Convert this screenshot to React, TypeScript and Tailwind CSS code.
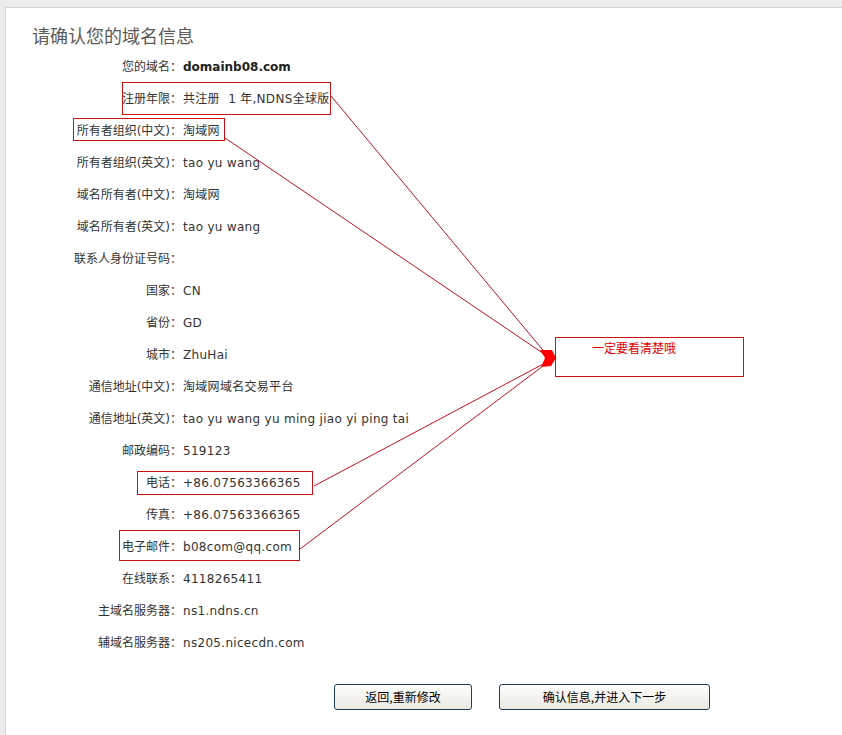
import React from "react";

const rows: { label: string; value: string; bold?: boolean }[] = [
  { label: "您的域名：", value: "domainb08.com", bold: true },
  { label: "注册年限：", value: "共注册  1 年,NDNS全球版" },
  { label: "所有者组织(中文)：", value: "淘域网" },
  { label: "所有者组织(英文)：", value: "tao yu wang" },
  { label: "域名所有者(中文)：", value: "淘域网" },
  { label: "域名所有者(英文)：", value: "tao yu wang" },
  { label: "联系人身份证号码：", value: "" },
  { label: "国家：", value: "CN" },
  { label: "省份：", value: "GD" },
  { label: "城市：", value: "ZhuHai" },
  { label: "通信地址(中文)：", value: "淘域网域名交易平台" },
  { label: "通信地址(英文)：", value: "tao yu wang yu ming jiao yi ping tai" },
  { label: "邮政编码：", value: "519123" },
  { label: "电话：", value: "+86.07563366365" },
  { label: "传真：", value: "+86.07563366365" },
  { label: "电子邮件：", value: "b08com@qq.com" },
  { label: "在线联系：", value: "4118265411" },
  { label: "主域名服务器：", value: "ns1.ndns.cn" },
  { label: "辅域名服务器：", value: "ns205.nicecdn.com" },
];

const font = "font-['DejaVu_Sans','Noto_Sans_CJK_SC',sans-serif]";

export default function App() {
  return (
    <div className={`relative w-[842px] h-[735px] overflow-hidden bg-[#ececec] pt-[7px] pl-[5px] ${font}`}>
      <div className="h-full bg-white border-l border-t border-[#d6d6d6] pt-[15px]">
        <div className="pl-[26px] h-[24px] leading-[24px] text-[18px] text-[#5a5a5a] font-['Noto_Sans_CJK_SC',sans-serif] mb-[4px]">
          请确认您的域名信息
        </div>
        <div className="flex flex-col">
          {rows.map((r) => (
            <div key={r.label} className="flex h-[32px] items-center text-[12px] text-[#333333]">
              <div className="w-[176px] shrink-0 text-right whitespace-pre">{r.label}</div>
              <div className={`pl-[1px] whitespace-pre ${r.bold ? "font-bold text-[#222222]" : "tracking-[0.3px]"}`}>{r.value}</div>
            </div>
          ))}
        </div>
        <div className="flex mt-[25px] pl-[328px] gap-[27px]">
          <button className="w-[138px] h-[26px] rounded-[3px] border border-[#1f3d5c] bg-gradient-to-b from-[#fdfdfb] to-[#ebe9e2] text-[12px] text-black font-['Noto_Sans_CJK_SC',sans-serif]">
            返回,重新修改
          </button>
          <button className="w-[211px] h-[26px] rounded-[3px] border border-[#1f3d5c] bg-gradient-to-b from-[#fdfdfb] to-[#ebe9e2] text-[12px] text-black font-['Noto_Sans_CJK_SC',sans-serif]">
            确认信息,并进入下一步
          </button>
        </div>
      </div>

      {/* annotation boxes */}
      <div className="absolute left-[122px] top-[82px] w-[209px] h-[33px] border border-[#cc1111]" />
      <div className="absolute left-[73px] top-[118px] w-[152px] h-[23px] border border-[#cc1111]" />
      <div className="absolute left-[137px] top-[471px] w-[176px] h-[24px] border border-[#cc1111]" />
      <div className="absolute left-[119px] top-[530px] w-[181px] h-[31px] border border-[#cc1111]" />
      <div className="absolute left-[555px] top-[337px] w-[189px] h-[40px] border border-[#cc1111]">
        <div className="absolute left-[36px] top-[2px] text-[12px] leading-[16px] text-[#dd0000] font-['Noto_Sans_CJK_SC',sans-serif]">
          一定要看清楚哦
        </div>
      </div>

      <svg className="absolute left-0 top-0 pointer-events-none" width="842" height="735" viewBox="0 0 842 735">
        <g stroke="#c81020" strokeWidth="1" fill="none">
          <line x1="331" y1="96" x2="547" y2="355" />
          <line x1="225" y1="138" x2="547" y2="356" />
          <line x1="314" y1="486" x2="547" y2="362" />
          <line x1="300" y1="549" x2="547" y2="363" />
        </g>
        <polygon points="540,350 552,350 556,358 551,366 541,367 545,358" fill="#ff0000" />
      </svg>
    </div>
  );
}
